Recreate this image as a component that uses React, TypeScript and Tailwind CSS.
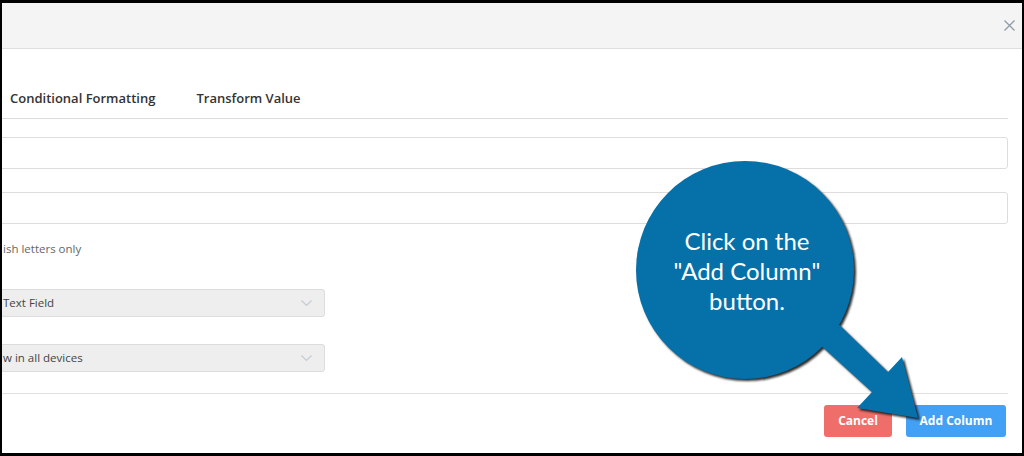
import type { ReactNode } from 'react'

const uiFont = { fontFamily: '"Open Sans", "Noto Sans", sans-serif' }

function Chevron(): ReactNode {
  return (
    <svg width="11" height="7" viewBox="0 0 11 7" className="shrink-0" aria-hidden="true">
      <polyline points="0.5,0.5 5.5,5.5 10.5,0.5" fill="none" stroke="#c3ccd5" strokeWidth="1.2" />
    </svg>
  )
}

function SelectBox({ children }: { children: ReactNode }): ReactNode {
  return (
    <div className="-ml-[12px] flex h-[28px] w-[335px] items-center justify-between rounded-[3px] border border-[#dcdcdc] bg-[#eeeeee] pl-[12px] pr-[12px] text-[11.5px] text-[#444]">
      <span className="whitespace-nowrap">{children}</span>
      <Chevron />
    </div>
  )
}

function Callout(): ReactNode {
  return (
    <div className="pointer-events-none absolute inset-0">
      <svg
        width="1024"
        height="456"
        viewBox="0 0 1024 456"
        className="absolute inset-0 drop-shadow-[2px_2px_1px_rgba(20,20,20,0.9)]"
        aria-hidden="true"
      >
        <g fill="#0670a9">
          <circle cx="745" cy="270" r="109" />
          <polygon points="826,312 888,372 902,357 918,418 857,408 872,392 806,332" />
        </g>
      </svg>
      <div
        className="absolute left-[637px] top-[226px] w-[220px] text-center text-[24px] leading-[30px] text-white"
        style={{ fontFamily: 'Lato, "Open Sans", sans-serif' }}
      >
        <div>Click on the</div>
        <div>"Add Column"</div>
        <div>button.</div>
      </div>
    </div>
  )
}

export default function App(): ReactNode {
  return (
    <div className="relative h-[456px] w-[1024px] bg-black pb-[3px] pl-[2px] pr-[2px] pt-[3px]" style={uiFont}>
      <div className="flex h-full w-full flex-col overflow-hidden bg-white">
        {/* modal header */}
        <header className="flex h-[46px] shrink-0 items-center justify-end border-b border-[#dedede] bg-[#f4f4f4] pr-[7px]">
          <svg width="11" height="11" viewBox="0 0 11 11" aria-hidden="true">
            <path d="M0.5 0.5 L10.5 10.5 M10.5 0.5 L0.5 10.5" stroke="#8d99a5" strokeWidth="1.2" />
          </svg>
        </header>

        <div className="flex flex-col pr-[14px] pt-[30px]">
          {/* tabs */}
          <nav className="flex h-[40px] items-center border-b border-[#dcdcdc] text-[13px] font-semibold text-[#333]">
            <span className="ml-[8px]">Conditional Formatting</span>
            <span className="ml-[41px]">Transform Value</span>
          </nav>

          <div className="-ml-[12px] mt-[18px] h-[32px] rounded-[3px] border border-[#dddddd] bg-white" />
          <div className="-ml-[12px] mt-[23px] h-[32px] rounded-[3px] border border-[#dddddd] bg-white" />

          <p className="mt-[17px] whitespace-nowrap pl-[1px] text-[11.5px] leading-[16px] text-[#666]">
            ish letters only
          </p>

          <div className="mt-[32px]">
            <SelectBox>Text Field</SelectBox>
          </div>
          <div className="mt-[27px]">
            <SelectBox>w in all devices</SelectBox>
          </div>

          {/* footer */}
          <footer className="mt-[21px] flex justify-end gap-[14px] border-t border-[#e0e0e0] pt-[11px] text-[12px] font-bold text-white">
            <button className="h-[32px] w-[68px] rounded-[3px] bg-[#f06e6a]">Cancel</button>
            <button className="mr-[2px] h-[32px] w-[100px] rounded-[3px] bg-[#42a0f5]">Add Column</button>
          </footer>
        </div>
      </div>
      <Callout />
    </div>
  )
}
